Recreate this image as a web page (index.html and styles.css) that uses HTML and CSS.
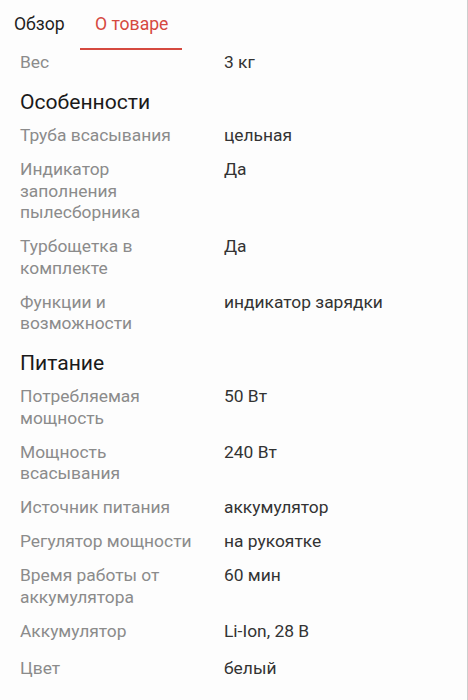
FILE: index.html
```html
<!DOCTYPE html>
<html lang="ru">
<head>
<meta charset="utf-8">
<link rel="stylesheet" href="styles.css">
</head>
<body>
<div class="page">
  <nav class="tabs">
    <div class="tab">Обзор</div>
    <div class="tab active">О товаре</div>
  </nav>
  <div class="specs">
    <div class="row"><div class="label">Вес</div><div class="value">3 кг</div></div>
    <h2 class="heading">Особенности</h2>
    <div class="row"><div class="label">Труба всасывания</div><div class="value">цельная</div></div>
    <div class="row"><div class="label">Индикатор заполнения пылесборника</div><div class="value">Да</div></div>
    <div class="row"><div class="label">Турбощетка в комплекте</div><div class="value">Да</div></div>
    <div class="row"><div class="label">Функции и возможности</div><div class="value">индикатор зарядки</div></div>
    <h2 class="heading">Питание</h2>
    <div class="row"><div class="label">Потребляемая мощность</div><div class="value">50 Вт</div></div>
    <div class="row"><div class="label">Мощность всасывания</div><div class="value">240 Вт</div></div>
    <div class="row"><div class="label">Источник питания</div><div class="value">аккумулятор</div></div>
    <div class="row"><div class="label">Регулятор мощности</div><div class="value">на рукоятке</div></div>
    <div class="row"><div class="label">Время работы от аккумулятора</div><div class="value">60 мин</div></div>
    <div class="row"><div class="label">Аккумулятор</div><div class="value">Li-Ion, 28 В</div></div>
    <div class="row group-start"><div class="label">Цвет</div><div class="value">белый</div></div>
  </div>
</div>
</body>
</html>
```

FILE: styles.css
```css
html, body {
  margin: 0;
  padding: 0;
  background: #fdfdfd;
}
body {
  font-family: Roboto, "Noto Sans", sans-serif;
  width: 468px;
  height: 700px;
  overflow: hidden;
}
.page {
  width: 468px;
  min-height: 700px;
  border-right: 1px solid #cdcdcd;
  box-sizing: border-box;
}
.tabs {
  display: flex;
  height: 50px;
}
.tab {
  font-size: 17.6px;
  color: #1f1f1f;
  padding: 14px 0 0 14px;
  width: 80px;
  box-sizing: border-box;
  height: 50px;
}
.tab.active {
  color: #d5493f;
  padding: 14px 0 0 15px;
  width: 102px;
  border-bottom: 2px solid #d5493f;
}
.specs {
  padding: 0 20px;
}
.row {
  display: grid;
  grid-template-columns: 204px 1fr;
  padding: 2px 0 10.5px;
  font-size: 17.4px;
  line-height: 21.5px;
}
.label {
  color: #8b8b8b;
  padding-right: 24px;
}
.value {
  color: #333333;
}
.heading {
  margin: 0;
  padding: 5px 0 8px;
  font-size: 21.1px;
  line-height: 26px;
  font-weight: 400;
  color: #1a1a1a;
}
.group-start {
  margin-top: 3px;
}
```
